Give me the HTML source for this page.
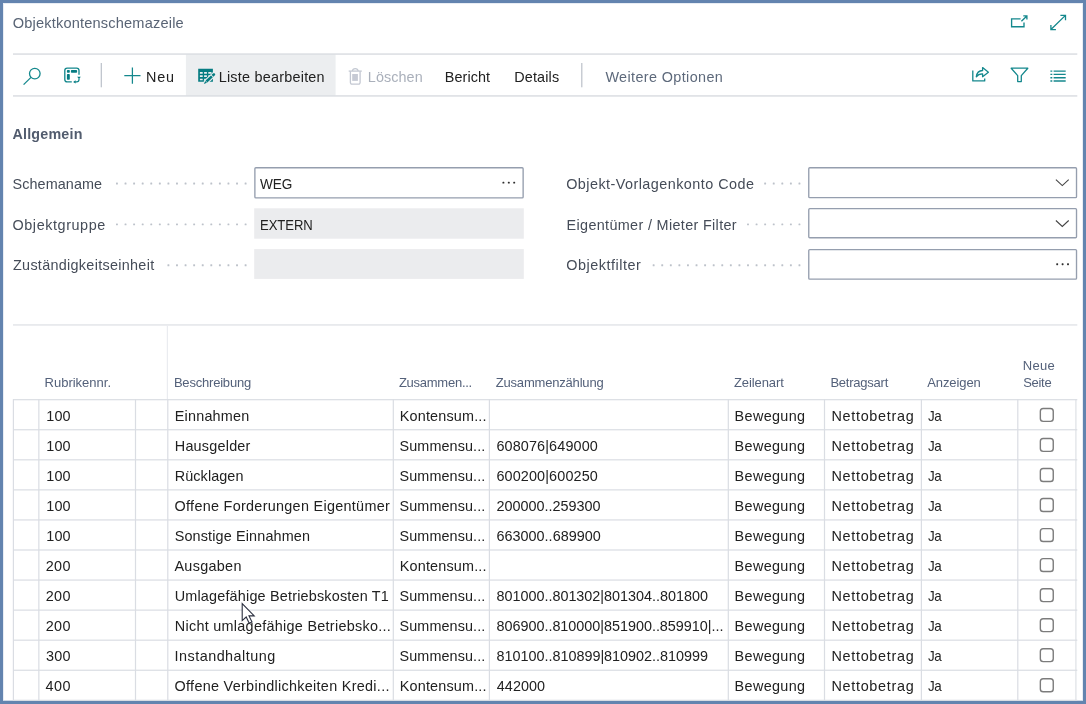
<!DOCTYPE html><html lang="de"><head><meta charset="utf-8"><title>Objektkontenschemazeile</title><style>
html,body{margin:0;padding:0;background:#fff;}
body{width:1086px;height:704px;overflow:hidden;position:relative;font-family:"Liberation Sans", Arial, sans-serif;}
#win{position:absolute;left:0;top:0;width:1086px;height:704px;box-sizing:border-box;border-style:solid;border-color:#6384af;border-width:3px;background:#fff;box-shadow:inset 0 0 0 1px #e8edf4;}
.abs{position:absolute;}
#txt{position:absolute;left:0;top:0;width:1086px;height:704px;will-change:transform;z-index:2;}
.t{position:absolute;white-space:nowrap;line-height:20px;height:20px;transform-origin:0 0;}
svg{position:absolute;overflow:visible;z-index:3;}
</style></head><body>
<div id="win"></div><div class="abs" style="left:3px;top:700px;width:1080px;height:1px;background:#cfd9e7"></div>
<svg id="lines" width="1086" height="704" viewBox="0 0 1086 704" style="left:0;top:0;z-index:1">
<rect x="185.9" y="54.6" width="149.7" height="40.8" fill="#eceef0"/>
<rect x="13" y="53.45" width="1064.30" height="1.2" fill="#d2d5db"/>
<rect x="13" y="95.35" width="1064.30" height="1.2" fill="#d2d5db"/>
<rect x="100.70" y="63" width="1.2" height="24.30" fill="#bbc0c9"/>
<rect x="581.20" y="63" width="1.2" height="24.30" fill="#bbc0c9"/>
<rect x="13" y="324.35" width="1064.30" height="1.2" fill="#dcdfe4"/>
<rect x="254.88" y="167.78" width="268.25" height="30.15" rx="1" fill="#fff" stroke="#959eae" stroke-width="1.35"/>
<rect x="254.2" y="208.3" width="269.6" height="30.4" fill="#ebecee"/>
<rect x="254.2" y="249.1" width="269.6" height="29.8" fill="#ebecee"/>
<rect x="808.77" y="167.78" width="267.75" height="29.85" rx="1" fill="#fff" stroke="#959eae" stroke-width="1.35"/>
<rect x="808.77" y="208.68" width="267.75" height="29.05" rx="1" fill="#fff" stroke="#959eae" stroke-width="1.35"/>
<rect x="808.77" y="249.58" width="267.75" height="29.55" rx="1" fill="#fff" stroke="#959eae" stroke-width="1.35"/>
<rect x="244.65" y="182.55" width="1.9" height="1.9" rx=".5" fill="#bdc2ca"/>
<rect x="236.07" y="182.55" width="1.9" height="1.9" rx=".5" fill="#bdc2ca"/>
<rect x="227.50" y="182.55" width="1.9" height="1.9" rx=".5" fill="#bdc2ca"/>
<rect x="218.92" y="182.55" width="1.9" height="1.9" rx=".5" fill="#bdc2ca"/>
<rect x="210.34" y="182.55" width="1.9" height="1.9" rx=".5" fill="#bdc2ca"/>
<rect x="201.77" y="182.55" width="1.9" height="1.9" rx=".5" fill="#bdc2ca"/>
<rect x="193.19" y="182.55" width="1.9" height="1.9" rx=".5" fill="#bdc2ca"/>
<rect x="184.61" y="182.55" width="1.9" height="1.9" rx=".5" fill="#bdc2ca"/>
<rect x="176.03" y="182.55" width="1.9" height="1.9" rx=".5" fill="#bdc2ca"/>
<rect x="167.46" y="182.55" width="1.9" height="1.9" rx=".5" fill="#bdc2ca"/>
<rect x="158.88" y="182.55" width="1.9" height="1.9" rx=".5" fill="#bdc2ca"/>
<rect x="150.30" y="182.55" width="1.9" height="1.9" rx=".5" fill="#bdc2ca"/>
<rect x="141.73" y="182.55" width="1.9" height="1.9" rx=".5" fill="#bdc2ca"/>
<rect x="133.15" y="182.55" width="1.9" height="1.9" rx=".5" fill="#bdc2ca"/>
<rect x="124.57" y="182.55" width="1.9" height="1.9" rx=".5" fill="#bdc2ca"/>
<rect x="116.00" y="182.55" width="1.9" height="1.9" rx=".5" fill="#bdc2ca"/>
<rect x="798.50" y="182.55" width="1.9" height="1.9" rx=".5" fill="#bdc2ca"/>
<rect x="789.92" y="182.55" width="1.9" height="1.9" rx=".5" fill="#bdc2ca"/>
<rect x="781.35" y="182.55" width="1.9" height="1.9" rx=".5" fill="#bdc2ca"/>
<rect x="772.77" y="182.55" width="1.9" height="1.9" rx=".5" fill="#bdc2ca"/>
<rect x="764.19" y="182.55" width="1.9" height="1.9" rx=".5" fill="#bdc2ca"/>
<rect x="244.65" y="223.45" width="1.9" height="1.9" rx=".5" fill="#bdc2ca"/>
<rect x="236.07" y="223.45" width="1.9" height="1.9" rx=".5" fill="#bdc2ca"/>
<rect x="227.50" y="223.45" width="1.9" height="1.9" rx=".5" fill="#bdc2ca"/>
<rect x="218.92" y="223.45" width="1.9" height="1.9" rx=".5" fill="#bdc2ca"/>
<rect x="210.34" y="223.45" width="1.9" height="1.9" rx=".5" fill="#bdc2ca"/>
<rect x="201.77" y="223.45" width="1.9" height="1.9" rx=".5" fill="#bdc2ca"/>
<rect x="193.19" y="223.45" width="1.9" height="1.9" rx=".5" fill="#bdc2ca"/>
<rect x="184.61" y="223.45" width="1.9" height="1.9" rx=".5" fill="#bdc2ca"/>
<rect x="176.03" y="223.45" width="1.9" height="1.9" rx=".5" fill="#bdc2ca"/>
<rect x="167.46" y="223.45" width="1.9" height="1.9" rx=".5" fill="#bdc2ca"/>
<rect x="158.88" y="223.45" width="1.9" height="1.9" rx=".5" fill="#bdc2ca"/>
<rect x="150.30" y="223.45" width="1.9" height="1.9" rx=".5" fill="#bdc2ca"/>
<rect x="141.73" y="223.45" width="1.9" height="1.9" rx=".5" fill="#bdc2ca"/>
<rect x="133.15" y="223.45" width="1.9" height="1.9" rx=".5" fill="#bdc2ca"/>
<rect x="124.57" y="223.45" width="1.9" height="1.9" rx=".5" fill="#bdc2ca"/>
<rect x="116.00" y="223.45" width="1.9" height="1.9" rx=".5" fill="#bdc2ca"/>
<rect x="798.50" y="223.45" width="1.9" height="1.9" rx=".5" fill="#bdc2ca"/>
<rect x="789.92" y="223.45" width="1.9" height="1.9" rx=".5" fill="#bdc2ca"/>
<rect x="781.35" y="223.45" width="1.9" height="1.9" rx=".5" fill="#bdc2ca"/>
<rect x="772.77" y="223.45" width="1.9" height="1.9" rx=".5" fill="#bdc2ca"/>
<rect x="764.19" y="223.45" width="1.9" height="1.9" rx=".5" fill="#bdc2ca"/>
<rect x="755.62" y="223.45" width="1.9" height="1.9" rx=".5" fill="#bdc2ca"/>
<rect x="747.04" y="223.45" width="1.9" height="1.9" rx=".5" fill="#bdc2ca"/>
<rect x="244.65" y="264.35" width="1.9" height="1.9" rx=".5" fill="#bdc2ca"/>
<rect x="236.07" y="264.35" width="1.9" height="1.9" rx=".5" fill="#bdc2ca"/>
<rect x="227.50" y="264.35" width="1.9" height="1.9" rx=".5" fill="#bdc2ca"/>
<rect x="218.92" y="264.35" width="1.9" height="1.9" rx=".5" fill="#bdc2ca"/>
<rect x="210.34" y="264.35" width="1.9" height="1.9" rx=".5" fill="#bdc2ca"/>
<rect x="201.77" y="264.35" width="1.9" height="1.9" rx=".5" fill="#bdc2ca"/>
<rect x="193.19" y="264.35" width="1.9" height="1.9" rx=".5" fill="#bdc2ca"/>
<rect x="184.61" y="264.35" width="1.9" height="1.9" rx=".5" fill="#bdc2ca"/>
<rect x="176.03" y="264.35" width="1.9" height="1.9" rx=".5" fill="#bdc2ca"/>
<rect x="167.46" y="264.35" width="1.9" height="1.9" rx=".5" fill="#bdc2ca"/>
<rect x="798.50" y="264.35" width="1.9" height="1.9" rx=".5" fill="#bdc2ca"/>
<rect x="789.92" y="264.35" width="1.9" height="1.9" rx=".5" fill="#bdc2ca"/>
<rect x="781.35" y="264.35" width="1.9" height="1.9" rx=".5" fill="#bdc2ca"/>
<rect x="772.77" y="264.35" width="1.9" height="1.9" rx=".5" fill="#bdc2ca"/>
<rect x="764.19" y="264.35" width="1.9" height="1.9" rx=".5" fill="#bdc2ca"/>
<rect x="755.62" y="264.35" width="1.9" height="1.9" rx=".5" fill="#bdc2ca"/>
<rect x="747.04" y="264.35" width="1.9" height="1.9" rx=".5" fill="#bdc2ca"/>
<rect x="738.46" y="264.35" width="1.9" height="1.9" rx=".5" fill="#bdc2ca"/>
<rect x="729.88" y="264.35" width="1.9" height="1.9" rx=".5" fill="#bdc2ca"/>
<rect x="721.31" y="264.35" width="1.9" height="1.9" rx=".5" fill="#bdc2ca"/>
<rect x="712.73" y="264.35" width="1.9" height="1.9" rx=".5" fill="#bdc2ca"/>
<rect x="704.15" y="264.35" width="1.9" height="1.9" rx=".5" fill="#bdc2ca"/>
<rect x="695.58" y="264.35" width="1.9" height="1.9" rx=".5" fill="#bdc2ca"/>
<rect x="687.00" y="264.35" width="1.9" height="1.9" rx=".5" fill="#bdc2ca"/>
<rect x="678.42" y="264.35" width="1.9" height="1.9" rx=".5" fill="#bdc2ca"/>
<rect x="669.85" y="264.35" width="1.9" height="1.9" rx=".5" fill="#bdc2ca"/>
<rect x="661.27" y="264.35" width="1.9" height="1.9" rx=".5" fill="#bdc2ca"/>
<rect x="652.69" y="264.35" width="1.9" height="1.9" rx=".5" fill="#bdc2ca"/>
<rect x="502.45" y="181.65" width="1.9" height="1.9" rx=".6" fill="#2e2e2e"/>
<rect x="507.85" y="181.65" width="1.9" height="1.9" rx=".6" fill="#2e2e2e"/>
<rect x="513.25" y="181.65" width="1.9" height="1.9" rx=".6" fill="#2e2e2e"/>
<rect x="1056.25" y="263.25" width="1.9" height="1.9" rx=".6" fill="#2e2e2e"/>
<rect x="1061.65" y="263.25" width="1.9" height="1.9" rx=".6" fill="#2e2e2e"/>
<rect x="1067.05" y="263.25" width="1.9" height="1.9" rx=".6" fill="#2e2e2e"/>
<rect x="12.80" y="399.2" width="1.2" height="301.30" fill="#dadde3"/>
<rect x="38.25" y="399.2" width="1.2" height="301.30" fill="#dadde3"/>
<rect x="134.90" y="399.2" width="1.2" height="301.30" fill="#dadde3"/>
<rect x="167.20" y="399.2" width="1.2" height="301.30" fill="#dadde3"/>
<rect x="392.70" y="399.2" width="1.2" height="301.30" fill="#dadde3"/>
<rect x="488.80" y="399.2" width="1.2" height="301.30" fill="#dadde3"/>
<rect x="727.70" y="399.2" width="1.2" height="301.30" fill="#dadde3"/>
<rect x="823.90" y="399.2" width="1.2" height="301.30" fill="#dadde3"/>
<rect x="920.80" y="399.2" width="1.2" height="301.30" fill="#dadde3"/>
<rect x="1017.20" y="399.2" width="1.2" height="301.30" fill="#dadde3"/>
<rect x="1075.30" y="399.2" width="1.2" height="301.30" fill="#dee1e6"/>
<rect x="166.80" y="325.5" width="1.2" height="73.70" fill="#eaecf0"/>
<rect x="13" y="399.10" width="1064.30" height="1.2" fill="#dadde3"/>
<rect x="13" y="429.16" width="1064.30" height="1.2" fill="#dadde3"/>
<rect x="13" y="459.22" width="1064.30" height="1.2" fill="#dadde3"/>
<rect x="13" y="489.28" width="1064.30" height="1.2" fill="#dadde3"/>
<rect x="13" y="519.34" width="1064.30" height="1.2" fill="#dadde3"/>
<rect x="13" y="549.40" width="1064.30" height="1.2" fill="#dadde3"/>
<rect x="13" y="579.46" width="1064.30" height="1.2" fill="#dadde3"/>
<rect x="13" y="609.52" width="1064.30" height="1.2" fill="#dadde3"/>
<rect x="13" y="639.58" width="1064.30" height="1.2" fill="#dadde3"/>
<rect x="13" y="669.64" width="1064.30" height="1.2" fill="#dadde3"/>
<rect x="13" y="699.70" width="1064.30" height="1.2" fill="#dadde3"/>
<rect x="1040.35" y="408.45" width="12.9" height="12.9" rx="2.8" fill="#fff" stroke="#7c7c7c" stroke-width="1.4"/>
<rect x="1040.35" y="438.49" width="12.9" height="12.9" rx="2.8" fill="#fff" stroke="#7c7c7c" stroke-width="1.4"/>
<rect x="1040.35" y="468.53" width="12.9" height="12.9" rx="2.8" fill="#fff" stroke="#7c7c7c" stroke-width="1.4"/>
<rect x="1040.35" y="498.57" width="12.9" height="12.9" rx="2.8" fill="#fff" stroke="#7c7c7c" stroke-width="1.4"/>
<rect x="1040.35" y="528.61" width="12.9" height="12.9" rx="2.8" fill="#fff" stroke="#7c7c7c" stroke-width="1.4"/>
<rect x="1040.35" y="558.65" width="12.9" height="12.9" rx="2.8" fill="#fff" stroke="#7c7c7c" stroke-width="1.4"/>
<rect x="1040.35" y="588.69" width="12.9" height="12.9" rx="2.8" fill="#fff" stroke="#7c7c7c" stroke-width="1.4"/>
<rect x="1040.35" y="618.73" width="12.9" height="12.9" rx="2.8" fill="#fff" stroke="#7c7c7c" stroke-width="1.4"/>
<rect x="1040.35" y="648.77" width="12.9" height="12.9" rx="2.8" fill="#fff" stroke="#7c7c7c" stroke-width="1.4"/>
<rect x="1040.35" y="678.81" width="12.9" height="12.9" rx="2.8" fill="#fff" stroke="#7c7c7c" stroke-width="1.4"/>
</svg>
<div id="txt">
<span class="t" style="left:12.71px;top:13.00px;font-size:14.6px;letter-spacing:0.178px;color:#596475;">Objektkontenschemazeile</span>
<span class="t" style="left:145.92px;top:67.00px;font-size:14.4px;letter-spacing:0.886px;color:#212121;">Neu</span>
<span class="t" style="left:218.67px;top:67.00px;font-size:14.4px;letter-spacing:0.236px;color:#212121;">Liste bearbeiten</span>
<span class="t" style="left:367.87px;top:67.00px;font-size:14.4px;letter-spacing:0.071px;color:#aab0bb;">Löschen</span>
<span class="t" style="left:444.82px;top:67.00px;font-size:14.4px;letter-spacing:0.087px;color:#212121;">Bericht</span>
<span class="t" style="left:514.32px;top:67.00px;font-size:14.4px;letter-spacing:0.139px;color:#212121;">Details</span>
<span class="t" style="left:605.39px;top:67.00px;font-size:14.4px;letter-spacing:0.383px;color:#5d697b;">Weitere Optionen</span>
<span class="t" style="left:12.49px;top:124.00px;font-size:14.3px;letter-spacing:0.194px;color:#525c6e;font-weight:700;">Allgemein</span>
<span class="t" style="left:12.55px;top:174.00px;font-size:14.4px;letter-spacing:0.083px;color:#454c58;">Schemaname</span>
<span class="t" style="left:12.52px;top:215.00px;font-size:14.4px;letter-spacing:0.579px;color:#454c58;">Objektgruppe</span>
<span class="t" style="left:12.99px;top:255.00px;font-size:14.4px;letter-spacing:0.299px;color:#454c58;">Zuständigkeitseinheit</span>
<span class="t" style="left:566.17px;top:174.00px;font-size:14.4px;letter-spacing:0.457px;color:#454c58;">Objekt-Vorlagenkonto Code</span>
<span class="t" style="left:566.57px;top:215.00px;font-size:14.4px;letter-spacing:0.341px;color:#454c58;">Eigentümer / Mieter Filter</span>
<span class="t" style="left:566.17px;top:255.00px;font-size:14.4px;letter-spacing:0.536px;color:#454c58;">Objektfilter</span>
<span class="t" style="left:260.14px;top:174.00px;font-size:14.8px;letter-spacing:-0.025px;color:#212121;transform:scaleX(0.9186);">WEG</span>
<span class="t" style="left:259.53px;top:215.00px;font-size:14.8px;letter-spacing:-0.060px;color:#212121;transform:scaleX(0.8835);">EXTERN</span>
<span class="t" style="left:44.53px;top:372.50px;font-size:13px;letter-spacing:0.006px;color:#54617a;">Rubrikennr.</span>
<span class="t" style="left:173.88px;top:372.50px;font-size:13px;letter-spacing:-0.199px;color:#54617a;">Beschreibung</span>
<span class="t" style="left:398.94px;top:372.50px;font-size:13px;letter-spacing:-0.260px;color:#54617a;">Zusammen...</span>
<span class="t" style="left:495.74px;top:372.50px;font-size:13px;letter-spacing:-0.186px;color:#54617a;">Zusammenzählung</span>
<span class="t" style="left:733.94px;top:372.50px;font-size:13px;letter-spacing:-0.096px;color:#54617a;">Zeilenart</span>
<span class="t" style="left:830.38px;top:372.50px;font-size:13px;letter-spacing:-0.229px;color:#54617a;">Betragsart</span>
<span class="t" style="left:927.17px;top:372.50px;font-size:13px;letter-spacing:-0.077px;color:#54617a;">Anzeigen</span>
<span class="t" style="left:1022.78px;top:355.50px;font-size:13px;letter-spacing:0.255px;color:#54617a;">Neue</span>
<span class="t" style="left:1023.26px;top:372.50px;font-size:13px;letter-spacing:-0.316px;color:#54617a;">Seite</span>
<span class="t" style="left:46.35px;top:406.00px;font-size:14.4px;letter-spacing:0.092px;color:#212121;">100</span>
<span class="t" style="left:174.77px;top:406.00px;font-size:14.4px;letter-spacing:0.208px;color:#212121;">Einnahmen</span>
<span class="t" style="left:399.77px;top:406.00px;font-size:14.4px;letter-spacing:0.177px;color:#212121;">Kontensum...</span>
<span class="t" style="left:734.62px;top:406.00px;font-size:14.4px;letter-spacing:0.351px;color:#212121;">Bewegung</span>
<span class="t" style="left:831.42px;top:406.00px;font-size:14.4px;letter-spacing:0.711px;color:#212121;">Nettobetrag</span>
<span class="t" style="left:927.84px;top:406.00px;font-size:14.4px;letter-spacing:-0.467px;color:#212121;transform:scaleX(0.9300);">Ja</span>
<span class="t" style="left:46.35px;top:436.00px;font-size:14.4px;letter-spacing:0.092px;color:#212121;">100</span>
<span class="t" style="left:174.77px;top:436.00px;font-size:14.4px;letter-spacing:0.225px;color:#212121;">Hausgelder</span>
<span class="t" style="left:399.55px;top:436.00px;font-size:14.4px;letter-spacing:0.099px;color:#212121;">Summensu...</span>
<span class="t" style="left:496.42px;top:436.00px;font-size:14.4px;letter-spacing:0.137px;color:#212121;">608076|649000</span>
<span class="t" style="left:734.62px;top:436.00px;font-size:14.4px;letter-spacing:0.351px;color:#212121;">Bewegung</span>
<span class="t" style="left:831.42px;top:436.00px;font-size:14.4px;letter-spacing:0.711px;color:#212121;">Nettobetrag</span>
<span class="t" style="left:927.84px;top:436.00px;font-size:14.4px;letter-spacing:-0.467px;color:#212121;transform:scaleX(0.9300);">Ja</span>
<span class="t" style="left:46.35px;top:466.00px;font-size:14.4px;letter-spacing:0.092px;color:#212121;">100</span>
<span class="t" style="left:174.77px;top:466.00px;font-size:14.4px;letter-spacing:0.084px;color:#212121;">Rücklagen</span>
<span class="t" style="left:399.55px;top:466.00px;font-size:14.4px;letter-spacing:0.099px;color:#212121;">Summensu...</span>
<span class="t" style="left:496.42px;top:466.00px;font-size:14.4px;letter-spacing:0.137px;color:#212121;">600200|600250</span>
<span class="t" style="left:734.62px;top:466.00px;font-size:14.4px;letter-spacing:0.351px;color:#212121;">Bewegung</span>
<span class="t" style="left:831.42px;top:466.00px;font-size:14.4px;letter-spacing:0.711px;color:#212121;">Nettobetrag</span>
<span class="t" style="left:927.84px;top:466.00px;font-size:14.4px;letter-spacing:-0.467px;color:#212121;transform:scaleX(0.9300);">Ja</span>
<span class="t" style="left:46.35px;top:496.00px;font-size:14.4px;letter-spacing:0.092px;color:#212121;">100</span>
<span class="t" style="left:174.57px;top:496.00px;font-size:14.4px;letter-spacing:0.295px;color:#212121;">Offene Forderungen Eigentümer</span>
<span class="t" style="left:399.55px;top:496.00px;font-size:14.4px;letter-spacing:0.099px;color:#212121;">Summensu...</span>
<span class="t" style="left:496.43px;top:496.00px;font-size:14.4px;letter-spacing:0.006px;color:#212121;">200000..259300</span>
<span class="t" style="left:734.62px;top:496.00px;font-size:14.4px;letter-spacing:0.351px;color:#212121;">Bewegung</span>
<span class="t" style="left:831.42px;top:496.00px;font-size:14.4px;letter-spacing:0.711px;color:#212121;">Nettobetrag</span>
<span class="t" style="left:927.84px;top:496.00px;font-size:14.4px;letter-spacing:-0.467px;color:#212121;transform:scaleX(0.9300);">Ja</span>
<span class="t" style="left:46.35px;top:526.00px;font-size:14.4px;letter-spacing:0.092px;color:#212121;">100</span>
<span class="t" style="left:174.65px;top:526.00px;font-size:14.4px;letter-spacing:0.150px;color:#212121;">Sonstige Einnahmen</span>
<span class="t" style="left:399.55px;top:526.00px;font-size:14.4px;letter-spacing:0.099px;color:#212121;">Summensu...</span>
<span class="t" style="left:496.42px;top:526.00px;font-size:14.4px;letter-spacing:0.026px;color:#212121;">663000..689900</span>
<span class="t" style="left:734.62px;top:526.00px;font-size:14.4px;letter-spacing:0.351px;color:#212121;">Bewegung</span>
<span class="t" style="left:831.42px;top:526.00px;font-size:14.4px;letter-spacing:0.711px;color:#212121;">Nettobetrag</span>
<span class="t" style="left:927.84px;top:526.00px;font-size:14.4px;letter-spacing:-0.467px;color:#212121;transform:scaleX(0.9300);">Ja</span>
<span class="t" style="left:45.63px;top:556.00px;font-size:14.4px;letter-spacing:0.455px;color:#212121;">200</span>
<span class="t" style="left:174.47px;top:556.00px;font-size:14.4px;letter-spacing:0.301px;color:#212121;">Ausgaben</span>
<span class="t" style="left:399.77px;top:556.00px;font-size:14.4px;letter-spacing:0.177px;color:#212121;">Kontensum...</span>
<span class="t" style="left:734.62px;top:556.00px;font-size:14.4px;letter-spacing:0.351px;color:#212121;">Bewegung</span>
<span class="t" style="left:831.42px;top:556.00px;font-size:14.4px;letter-spacing:0.711px;color:#212121;">Nettobetrag</span>
<span class="t" style="left:927.84px;top:556.00px;font-size:14.4px;letter-spacing:-0.467px;color:#212121;transform:scaleX(0.9300);">Ja</span>
<span class="t" style="left:45.63px;top:586.00px;font-size:14.4px;letter-spacing:0.455px;color:#212121;">200</span>
<span class="t" style="left:174.64px;top:586.00px;font-size:14.4px;letter-spacing:0.197px;color:#212121;">Umlagefähige Betriebskosten T1</span>
<span class="t" style="left:399.55px;top:586.00px;font-size:14.4px;letter-spacing:0.099px;color:#212121;">Summensu...</span>
<span class="t" style="left:496.52px;top:586.00px;font-size:14.4px;letter-spacing:-0.016px;color:#212121;">801000..801302|801304..801800</span>
<span class="t" style="left:734.62px;top:586.00px;font-size:14.4px;letter-spacing:0.351px;color:#212121;">Bewegung</span>
<span class="t" style="left:831.42px;top:586.00px;font-size:14.4px;letter-spacing:0.711px;color:#212121;">Nettobetrag</span>
<span class="t" style="left:927.84px;top:586.00px;font-size:14.4px;letter-spacing:-0.467px;color:#212121;transform:scaleX(0.9300);">Ja</span>
<span class="t" style="left:45.63px;top:616.00px;font-size:14.4px;letter-spacing:0.455px;color:#212121;">200</span>
<span class="t" style="left:174.77px;top:616.00px;font-size:14.4px;letter-spacing:0.287px;color:#212121;">Nicht umlagefähige Betriebsko...</span>
<span class="t" style="left:399.55px;top:616.00px;font-size:14.4px;letter-spacing:0.099px;color:#212121;">Summensu...</span>
<span class="t" style="left:496.52px;top:616.00px;font-size:14.4px;letter-spacing:-0.019px;color:#212121;">806900..810000|851900..859910|...</span>
<span class="t" style="left:734.62px;top:616.00px;font-size:14.4px;letter-spacing:0.351px;color:#212121;">Bewegung</span>
<span class="t" style="left:831.42px;top:616.00px;font-size:14.4px;letter-spacing:0.711px;color:#212121;">Nettobetrag</span>
<span class="t" style="left:927.84px;top:616.00px;font-size:14.4px;letter-spacing:-0.467px;color:#212121;transform:scaleX(0.9300);">Ja</span>
<span class="t" style="left:45.95px;top:646.00px;font-size:14.4px;letter-spacing:0.293px;color:#212121;">300</span>
<span class="t" style="left:174.62px;top:646.00px;font-size:14.4px;letter-spacing:0.471px;color:#212121;">Instandhaltung</span>
<span class="t" style="left:399.55px;top:646.00px;font-size:14.4px;letter-spacing:0.099px;color:#212121;">Summensu...</span>
<span class="t" style="left:496.52px;top:646.00px;font-size:14.4px;letter-spacing:-0.012px;color:#212121;">810100..810899|810902..810999</span>
<span class="t" style="left:734.62px;top:646.00px;font-size:14.4px;letter-spacing:0.351px;color:#212121;">Bewegung</span>
<span class="t" style="left:831.42px;top:646.00px;font-size:14.4px;letter-spacing:0.711px;color:#212121;">Nettobetrag</span>
<span class="t" style="left:927.84px;top:646.00px;font-size:14.4px;letter-spacing:-0.467px;color:#212121;transform:scaleX(0.9300);">Ja</span>
<span class="t" style="left:45.52px;top:676.00px;font-size:14.4px;letter-spacing:0.509px;color:#212121;">400</span>
<span class="t" style="left:174.57px;top:676.00px;font-size:14.4px;letter-spacing:0.298px;color:#212121;">Offene Verbindlichkeiten Kredi...</span>
<span class="t" style="left:399.77px;top:676.00px;font-size:14.4px;letter-spacing:0.177px;color:#212121;">Kontensum...</span>
<span class="t" style="left:496.82px;top:676.00px;font-size:14.4px;letter-spacing:0.048px;color:#212121;">442000</span>
<span class="t" style="left:734.62px;top:676.00px;font-size:14.4px;letter-spacing:0.351px;color:#212121;">Bewegung</span>
<span class="t" style="left:831.42px;top:676.00px;font-size:14.4px;letter-spacing:0.711px;color:#212121;">Nettobetrag</span>
<span class="t" style="left:927.84px;top:676.00px;font-size:14.4px;letter-spacing:-0.467px;color:#212121;transform:scaleX(0.9300);">Ja</span>
</div>
<svg width="1086" height="704" viewBox="0 0 1086 704" style="left:0;top:0" fill="none" stroke-linecap="butt">
<g stroke="#14888d" stroke-width="1.3"><circle cx="34.8" cy="73.6" r="5.3"/><path d="M31 77.4 L23.6 84.6"/></g>
<g stroke="#14888d" stroke-width="1.35"><path d="M71.8 81.9 H67.2 a2.4 2.4 0 0 1 -2.4 -2.4 V70.5 a2.4 2.4 0 0 1 2.4 -2.4 H76.6 a2.4 2.4 0 0 1 2.4 2.4 V74.8"/><path d="M79 78.4 V79.6 a2.3 2.3 0 0 1 -2.3 2.3 H75.2" stroke-width="1.25"/></g>
<g fill="#067c82" stroke="none"><rect x="66.9" y="70" width="2.9" height="2.7" rx=".8"/><rect x="70.9" y="70" width="6.2" height="2.7" rx=".8"/><rect x="66.9" y="74.1" width="2.9" height="5.7" rx=".8"/><path d="M77.2 76.8 h3.6 l-1.8 2.3z"/><path d="M75.6 80.2 v3.4 l-2.5 -1.7z"/></g>
<g stroke="#14888d" stroke-width="1.25"><path d="M124.3 75.6 H140.5 M132.4 67.5 V83.75"/></g>
<path fill="#067c82" fill-rule="evenodd" d="M198.2 68.8 H212.9 V81.7 H198.2 Z M199.9 72.1 V73.7 H202.7 V72.1 Z M199.9 75.3 V76.9 H202.7 V75.3 Z M199.9 78.7 V80.3 H202.7 V78.7 Z M204.1 72.1 V73.7 H206.9 V72.1 Z M204.1 75.3 V76.9 H206.9 V75.3 Z M204.1 78.7 V80.3 H206.9 V78.7 Z M208.3 72.1 V73.7 H211.5 V72.1 Z M208.3 75.3 V76.9 H211.5 V75.3 Z M208.3 78.7 V80.3 H211.5 V78.7 Z "/>
<path fill="#eceef0" d="M203.03 84.72 L207.37 83.93 L216.88 74.93 L213.59 71.44 L204.07 80.44Z"/>
<g fill="#067c82"><path d="M203.90 83.90 L206.97 82.78 L205.19 80.89Z"/><path d="M207.34 82.44 L212.79 77.29 L211.00 75.40 L205.55 80.55Z"/><path d="M213.37 76.74 L215.11 75.09 L215.16 73.97 L214.44 73.22 L213.33 73.20 L211.58 74.85Z"/></g>
<g stroke="#c3c8d2" stroke-width="1.3"><path d="M348.7 71.1 H361.8"/><path d="M352.3 71 a3 3 0 0 1 5.9 0"/><path d="M350.4 71.3 V82.6 a1.6 1.6 0 0 0 1.6 1.6 H358.5 a1.6 1.6 0 0 0 1.6 -1.6 V71.3"/></g><rect x="352.2" y="74" width="5.7" height="6.9" fill="#c6cad4"/>
<g stroke="#14888d" stroke-width="1.35"><path d="M1020.6 18.9 H1011.6 V26.7 H1024 V22.4"/><path d="M1021.4 21.3 L1026.6 16.2 M1023.3 15.9 H1026.9 V19.6"/></g>
<g stroke="#14888d" stroke-width="1.3"><path d="M1051.2 29.3 L1065.2 15.6 M1060.4 15.4 H1065.5 V20.2 M1050.9 24.9 V29.6 H1055.9"/></g>
<g stroke="#14888d" stroke-width="1.3" stroke-linejoin="round"><path d="M972.8 70.4 V80.9 H984.7 V78.6"/><path d="M976.3 76.8 C976.8 72.8 979.5 70.6 982.6 70.5 V67.6 L988.4 72.2 L982.6 76.7 V73.8 C980.2 73.7 977.9 74.5 976.3 76.8z"/></g>
<g stroke="#14888d" stroke-width="1.3" stroke-linejoin="round"><path d="M1011.2 68.2 H1027.8 L1021.3 75.6 V81.6 H1017.7 V75.6 Z"/></g>
<path stroke="#14888d" stroke-width="1.35" d="M1050.4 71.1 H1052.3 M1053.6 71.1 H1065.7 M1050.4 74.4 H1052.3 M1053.6 74.4 H1065.7 M1050.4 77.7 H1052.3 M1053.6 77.7 H1065.7 M1050.4 81.0 H1052.3 M1053.6 81.0 H1065.7"/>
<path stroke="#444" stroke-width="1.1" d="M1055.9 179.6 L1062.3 185.6 L1068.7 179.6"/>
<path stroke="#444" stroke-width="1.1" d="M1055.9 220.5 L1062.3 226.5 L1068.7 220.5"/>
<path d="M242.2 603.6 V620.6 L246.2 617 L249.2 623.3 L252 622 L249 615.9 H254.2 Z" fill="#fff" stroke="#2a2f3f" stroke-width="1.1" stroke-linejoin="miter"/>
</svg>
</body></html>
